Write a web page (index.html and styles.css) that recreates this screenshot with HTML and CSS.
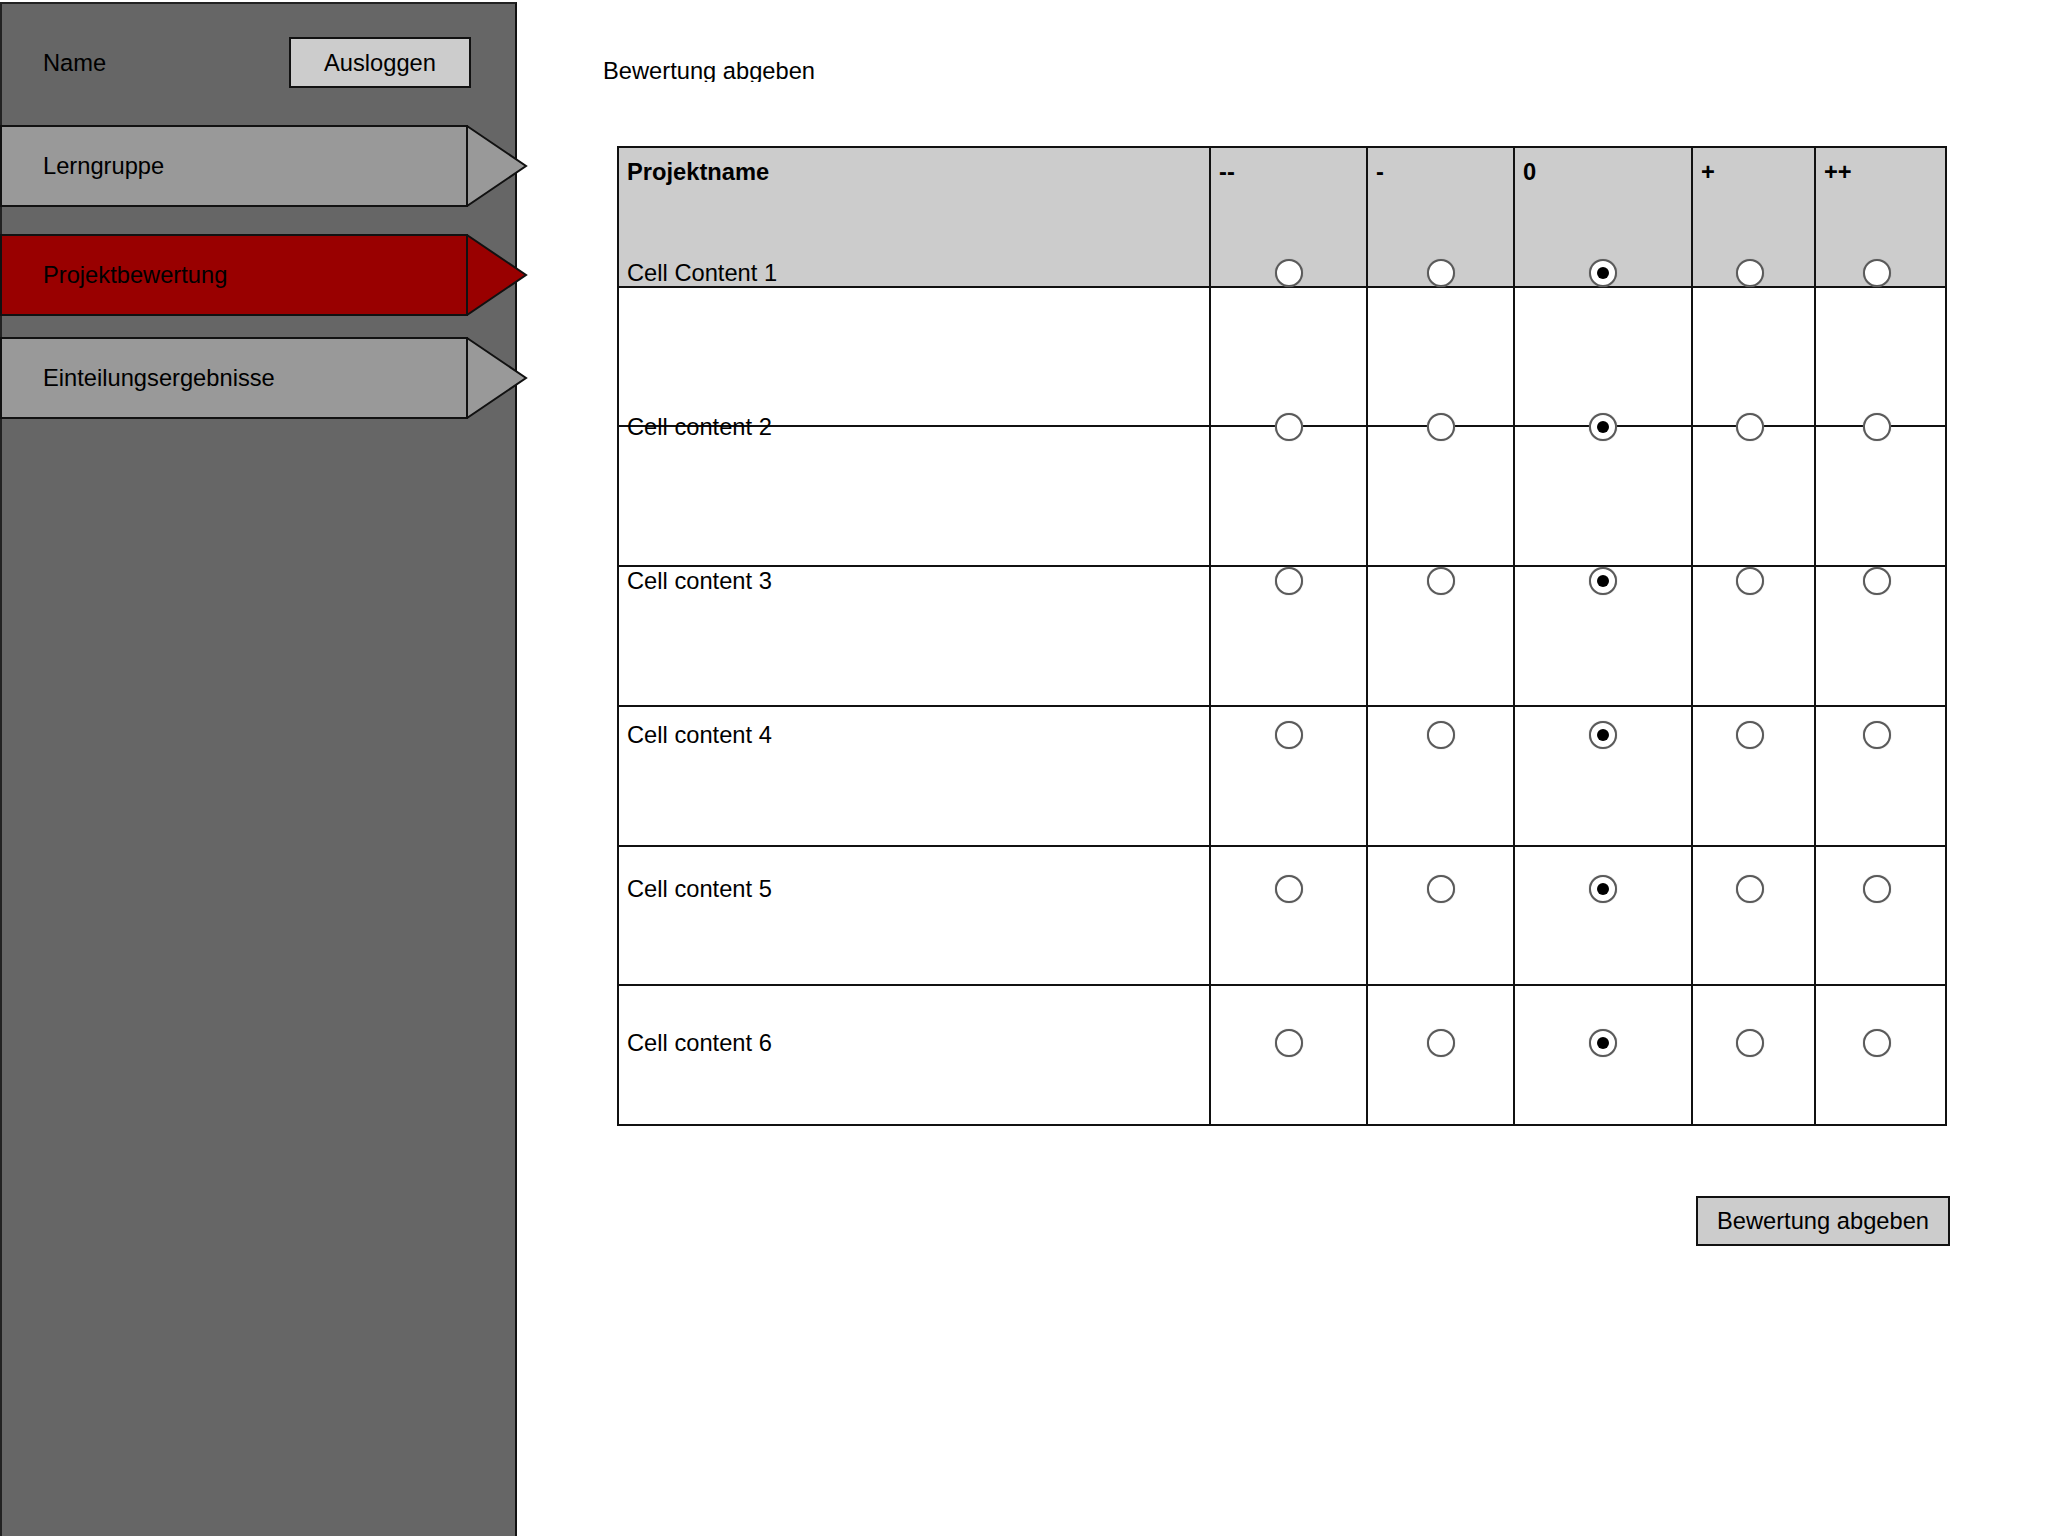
FILE: index.html
```html
<!DOCTYPE html>
<html lang="de">
<head>
<meta charset="utf-8">
<title>Bewertung abgeben</title>
<link rel="stylesheet" href="styles.css">
</head>
<body>
<aside class="sidebar">
  <div class="side-head">
    <span class="user-name">Name</span>
    <button class="btn logout">Ausloggen</button>
  </div>
  <nav class="nav">
    <div class="nav-item">
      <div class="nav-body">Lerngruppe</div>
      <svg class="nav-tip" width="62" height="82" viewBox="0 0 62 82"><polygon points="1,1 60,41 1,81" fill="#999999" stroke="#111" stroke-width="2"/></svg>
    </div>
    <div class="nav-item active">
      <div class="nav-body">Projektbewertung</div>
      <svg class="nav-tip" width="62" height="82" viewBox="0 0 62 82"><polygon points="1,1 60,41 1,81" fill="#990000" stroke="#111" stroke-width="2"/></svg>
    </div>
    <div class="nav-item">
      <div class="nav-body">Einteilungsergebnisse</div>
      <svg class="nav-tip" width="62" height="82" viewBox="0 0 62 82"><polygon points="1,1 60,41 1,81" fill="#999999" stroke="#111" stroke-width="2"/></svg>
    </div>
  </nav>
</aside>
<main class="main">
  <div class="page-title">Bewertung abgeben</div>
  <div class="rating">
    <div class="grid">
      <div class="cell head">Projektname</div>
      <div class="cell head">--</div>
      <div class="cell head">-</div>
      <div class="cell head">0</div>
      <div class="cell head">+</div>
      <div class="cell head">++</div>
      <div class="cell"></div><div class="cell"></div><div class="cell"></div><div class="cell"></div><div class="cell"></div><div class="cell"></div>
      <div class="cell"></div><div class="cell"></div><div class="cell"></div><div class="cell"></div><div class="cell"></div><div class="cell"></div>
      <div class="cell"></div><div class="cell"></div><div class="cell"></div><div class="cell"></div><div class="cell"></div><div class="cell"></div>
      <div class="cell"></div><div class="cell"></div><div class="cell"></div><div class="cell"></div><div class="cell"></div><div class="cell"></div>
      <div class="cell"></div><div class="cell"></div><div class="cell"></div><div class="cell"></div><div class="cell"></div><div class="cell"></div>
      <div class="cell"></div><div class="cell"></div><div class="cell"></div><div class="cell"></div><div class="cell"></div><div class="cell"></div>
    </div>
    <div class="items">
      <div class="item"><span class="label">Cell Content 1</span><span class="radio"></span><span class="radio"></span><span class="radio on"></span><span class="radio"></span><span class="radio"></span></div>
      <div class="item"><span class="label">Cell content 2</span><span class="radio"></span><span class="radio"></span><span class="radio on"></span><span class="radio"></span><span class="radio"></span></div>
      <div class="item"><span class="label">Cell content 3</span><span class="radio"></span><span class="radio"></span><span class="radio on"></span><span class="radio"></span><span class="radio"></span></div>
      <div class="item"><span class="label">Cell content 4</span><span class="radio"></span><span class="radio"></span><span class="radio on"></span><span class="radio"></span><span class="radio"></span></div>
      <div class="item"><span class="label">Cell content 5</span><span class="radio"></span><span class="radio"></span><span class="radio on"></span><span class="radio"></span><span class="radio"></span></div>
      <div class="item"><span class="label">Cell content 6</span><span class="radio"></span><span class="radio"></span><span class="radio on"></span><span class="radio"></span><span class="radio"></span></div>
    </div>
  </div>
  <div class="actions">
    <button class="btn submit">Bewertung abgeben</button>
  </div>
</main>
</body>
</html>
```
FILE: styles.css
```css
* { box-sizing: border-box; }

html, body {
  margin: 0;
  height: 100%;
  overflow: hidden;
  background: #ffffff;
}

body {
  display: flex;
  align-items: flex-start;
  font-family: "Liberation Sans", Arial, sans-serif;
  font-size: 23.7px;
  line-height: 30px;
  color: #000;
}

.sidebar {
  flex: 0 0 517px;
  width: 517px;
  margin-top: 2px;
  height: calc(100vh - 2px);
  background: #666666;
  border-top: 2px solid #222;
  border-left: 2px solid #222;
  border-right: 2px solid #111;
  position: relative;
  z-index: 1;
}

.side-head {
  display: flex;
  justify-content: space-between;
  align-items: center;
  padding: 33px 44px 0 41px;
}

.btn {
  font-family: "Liberation Sans", Arial, sans-serif;
  font-size: 23.7px;
  line-height: 30px;
  color: #000;
  background: #cccccc;
  border: 2px solid #111;
  border-radius: 0;
  padding: 0;
  margin: 0;
  display: flex;
  align-items: center;
  justify-content: center;
}

.logout {
  width: 182px;
  height: 51px;
}

.nav {
  margin-top: 37px;
  display: flex;
  flex-direction: column;
  gap: 21px;
}

.nav-item {
  display: flex;
  margin-left: -2px;
  height: 82px;
}

.nav-item.active {
  margin-top: 6px;
}

.nav-body {
  flex: 0 0 468px;
  width: 468px;
  height: 82px;
  background: #999999;
  border: 2px solid #111;
  display: flex;
  align-items: center;
  padding-left: 41px;
}

.nav-item.active .nav-body {
  background: #990000;
}

.nav-tip {
  display: block;
  margin-left: -2px;
  flex: 0 0 62px;
}

.main {
  flex: 1 1 auto;
  display: flex;
  flex-direction: column;
  align-items: flex-start;
  padding-left: 100px;
}

.page-title {
  margin-top: 56px;
  margin-left: -14px;
  height: 26px;
  overflow: hidden;
}

.rating {
  position: relative;
  margin-top: 64px;
  width: 1330px;
  border-left: 2px solid #111;
  border-top: 2px solid #111;
}

.grid {
  display: grid;
  grid-template-columns: 592px 157px 147px 178px 123px 131px;
  grid-template-rows: repeat(7, 1fr);
  height: 978px;
}

.cell {
  border-right: 2px solid #111;
  border-bottom: 2px solid #111;
}

.cell.head {
  background: #cccccc;
  font-weight: bold;
  padding: 9px 0 0 8px;
}

.items {
  position: absolute;
  top: 110px;
  left: 0;
  right: 0;
  display: flex;
  flex-direction: column;
  gap: 124px;
}

.item {
  display: grid;
  grid-template-columns: 592px 157px 147px 178px 123px 131px;
  height: 30px;
  align-items: center;
}

.label {
  padding-left: 8px;
}

.radio {
  justify-self: center;
  position: relative;
  width: 28px;
  height: 28px;
  margin-right: 2px;
  border-radius: 50%;
  background: #fff;
  border: 2px solid #5a5a5a;
  box-shadow: 0 0 1px #999;
}

.radio:nth-child(5),
.radio:nth-child(6) {
  margin-right: 9px;
}

.radio.on::after {
  content: "";
  position: absolute;
  left: 50%;
  top: 50%;
  width: 12px;
  height: 12px;
  margin: -6px 0 0 -6px;
  border-radius: 50%;
  background: #000;
}

.actions {
  width: 1333px;
  display: flex;
  justify-content: flex-end;
  margin-top: 70px;
}

.submit {
  width: 254px;
  height: 50px;
}
```
